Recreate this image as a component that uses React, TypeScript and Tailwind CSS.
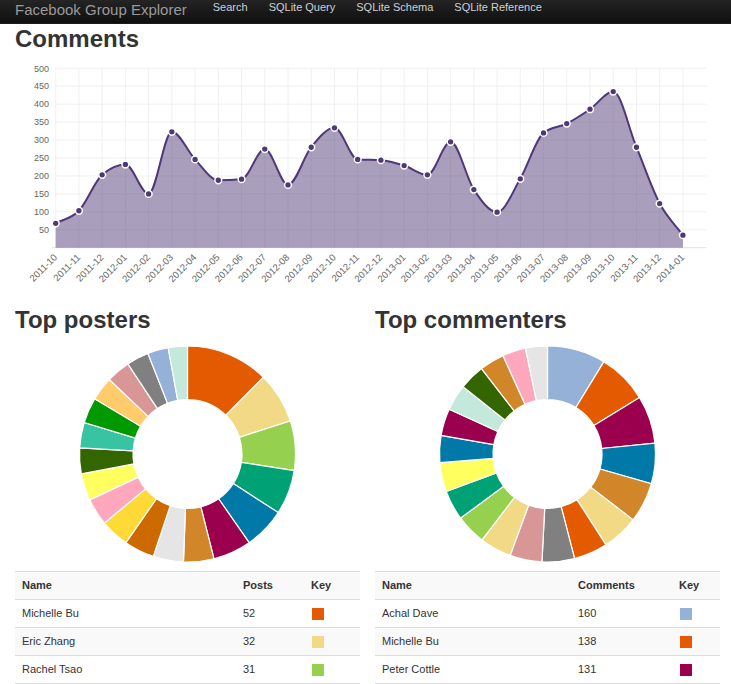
const months = [
  "2011-10", "2011-11", "2011-12", "2012-01", "2012-02", "2012-03", "2012-04",
  "2012-05", "2012-06", "2012-07", "2012-08", "2012-09", "2012-10", "2012-11",
  "2012-12", "2013-01", "2013-02", "2013-03", "2013-04", "2013-05", "2013-06",
  "2013-07", "2013-08", "2013-09", "2013-10", "2013-11", "2013-12", "2014-01",
];
const counts = [
  68, 103, 203, 232, 150, 323, 246, 188, 191, 275, 175, 280, 334, 246,
  244, 229, 203, 295, 162, 99, 192, 320, 346, 386, 435, 280, 123, 35,
];

const posters = [
  { name: "Michelle Bu", n: 52, color: "#e35a00" },
  { name: "Eric Zhang", n: 32, color: "#f1d986" },
  { name: "Rachel Tsao", n: 31, color: "#95d14f" },
  { name: "", n: 28, color: "#00a275" },
  { name: "", n: 26, color: "#0079a8" },
  { name: "", n: 24, color: "#9b004f" },
  { name: "", n: 19, color: "#d1862a" },
  { name: "", n: 19, color: "#e5e5e5" },
  { name: "", n: 19, color: "#cc6a00" },
  { name: "", n: 18, color: "#ffd935" },
  { name: "", n: 17, color: "#ffa7bc" },
  { name: "", n: 17, color: "#ffff5f" },
  { name: "", n: 16, color: "#336600" },
  { name: "", n: 16, color: "#38c3a3" },
  { name: "", n: 16, color: "#009a00" },
  { name: "", n: 15, color: "#ffcb6b" },
  { name: "", n: 15, color: "#d99696" },
  { name: "", n: 14, color: "#808080" },
  { name: "", n: 13, color: "#96b1d8" },
  { name: "", n: 12, color: "#c4e9dc" },
];

const commenters = [
  { name: "Achal Dave", n: 160, color: "#96b1d8" },
  { name: "Michelle Bu", n: 138, color: "#e35a00" },
  { name: "Peter Cottle", n: 131, color: "#9b004f" },
  { name: "", n: 111, color: "#0079a8" },
  { name: "", n: 110, color: "#d1862a" },
  { name: "", n: 100, color: "#f1d986" },
  { name: "", n: 93, color: "#e35a00" },
  { name: "", n: 89, color: "#808080" },
  { name: "", n: 88, color: "#d99696" },
  { name: "", n: 87, color: "#f1d986" },
  { name: "", n: 83, color: "#95d14f" },
  { name: "", n: 82, color: "#00a275" },
  { name: "", n: 80, color: "#ffff5f" },
  { name: "", n: 74, color: "#0079a8" },
  { name: "", n: 74, color: "#9b004f" },
  { name: "", n: 72, color: "#c4e9dc" },
  { name: "", n: 70, color: "#336600" },
  { name: "", n: 68, color: "#d1862a" },
  { name: "", n: 64, color: "#ffa7bc" },
  { name: "", n: 60, color: "#e5e5e5" },
];

// chart geometry, in page coordinates
const X0 = 55.7;
const STEP = 23.23;
const BASE = 247.7;
const UNIT = 0.3588;
const xAt = (i: number) => X0 + i * STEP;
const yAt = (v: number) => BASE - v * UNIT;

// monotone cubic, like d3.curveMonotoneX
const monotone = (pts: [number, number][]) => {
  const n = pts.length;
  const s: number[] = [];
  for (let i = 0; i < n - 1; i++) s.push((pts[i + 1][1] - pts[i][1]) / (pts[i + 1][0] - pts[i][0]));
  const t: number[] = [];
  for (let i = 0; i < n; i++) {
    if (i === 0) t.push(s[0]);
    else if (i === n - 1) t.push(s[n - 2]);
    else {
      const a = s[i - 1];
      const b = s[i];
      if (a * b <= 0) t.push(0);
      else t.push((Math.sign(a) + Math.sign(b)) * Math.min(Math.abs(a), Math.abs(b), 0.5 * Math.abs((a + b) / 2)));
    }
  }
  let d = `M${pts[0][0]},${pts[0][1]}`;
  for (let i = 0; i < n - 1; i++) {
    const h = (pts[i + 1][0] - pts[i][0]) / 3;
    d += ` C${pts[i][0] + h},${pts[i][1] + t[i] * h} ${pts[i + 1][0] - h},${pts[i + 1][1] - t[i + 1] * h} ${pts[i + 1][0]},${pts[i + 1][1]}`;
  }
  return d;
};

const CommentsChart = () => {
  const pts = counts.map((v, i) => [xAt(i), yAt(v)] as [number, number]);
  const line = monotone(pts);
  const area = `${line} L${xAt(counts.length - 1)},${BASE} L${X0},${BASE} Z`;
  const ticks = [50, 100, 150, 200, 250, 300, 350, 400, 450, 500];
  return (
    <svg width={731} height={251} className="block">
      <g transform="translate(0,-54)">
        {ticks.map((v) => (
          <line key={v} x1={X0} x2={706.7} y1={yAt(v)} y2={yAt(v)} stroke="#f0f0f0" strokeWidth={1} />
        ))}
        {months.map((m, i) => (
          <line key={m} x1={xAt(i)} x2={xAt(i)} y1={yAt(500)} y2={BASE} stroke="#f0f0f0" strokeWidth={1} />
        ))}
        <line x1={52} x2={706.7} y1={BASE} y2={BASE} stroke="#e2e2e2" strokeWidth={1} />
        <path d={area} fill="#563d7c" fillOpacity={0.5} />
        <path d={line} fill="none" stroke="#4f3877" strokeWidth={2} />
        {pts.map(([x, y], i) => (
          <circle key={i} cx={x} cy={y} r={3.4} fill="#4f3877" stroke="#fff" strokeWidth={1.5} />
        ))}
        {ticks.map((v) => (
          <text key={v} x={49} y={yAt(v) + 3.2} textAnchor="end" fontSize={9} fill="#666" fontFamily="Liberation Sans, Arial, sans-serif">
            {v}
          </text>
        ))}
        {months.map((m, i) => (
          <text
            key={m}
            x={xAt(i) + 2}
            y={258}
            textAnchor="end"
            fontSize={9.5}
            fill="#666"
            fontFamily="Liberation Sans, Arial, sans-serif"
            transform={`rotate(-45 ${xAt(i) + 2} 258)`}
          >
            {m}
          </text>
        ))}
      </g>
    </svg>
  );
};

const arc = (cx: number, cy: number, r0: number, r1: number, a0: number, a1: number) => {
  const p = (r: number, a: number) => `${cx + r * Math.sin(a)},${cy - r * Math.cos(a)}`;
  const large = a1 - a0 > Math.PI ? 1 : 0;
  return `M${p(r1, a0)} A${r1},${r1} 0 ${large} 1 ${p(r1, a1)} L${p(r0, a1)} A${r0},${r0} 0 ${large} 0 ${p(r0, a0)} Z`;
};

type Slice = { name: string; n: number; color: string };

const Donut = ({ data }: { data: Slice[] }) => {
  const total = data.reduce((a, d) => a + d.n, 0);
  let acc = 0;
  return (
    <svg width={345} height={236} className="block">
      {data.map((d, i) => {
        const a0 = (acc / total) * Math.PI * 2;
        acc += d.n;
        const a1 = (acc / total) * Math.PI * 2;
        return <path key={i} d={arc(172.5, 119, 54.5, 108, a0, a1)} fill={d.color} stroke="#fff" strokeWidth={1.2} />;
      })}
    </svg>
  );
};

const TopTable = ({ data, label, nameW, countW }: { data: Slice[]; label: string; nameW: string; countW: string }) => (
  <div className="text-[11px] text-[#333]">
    <div className="flex items-center h-[28px] border-t border-[#ddd] bg-[#f9f9f9] font-bold">
      <div className={`${nameW} px-[7px]`}>Name</div>
      <div className={`${countW} px-[7px]`}>{label}</div>
      <div className="flex-1 px-[7px]">Key</div>
    </div>
    {data.slice(0, 3).map((d, i) => (
      <div
        key={d.name}
        className={`flex items-center h-[28px] border-t border-[#ddd] ${i === 1 ? "bg-[#f9f9f9]" : "bg-white"} ${i === 2 ? "border-b h-[29px]" : ""}`}
      >
        <div className={`${nameW} px-[7px]`}>{d.name}</div>
        <div className={`${countW} px-[7px]`}>{d.n}</div>
        <div className="flex-1 px-[7px] pl-[8px]">
          <span className="block w-[12px] h-[12px]" style={{ backgroundColor: d.color }} />
        </div>
      </div>
    ))}
  </div>
);

export default function App() {
  return (
    <div className="min-h-screen bg-white text-[#333] font-['Liberation_Sans',Helvetica,Arial,sans-serif]">
      <nav className="h-[24px] bg-linear-to-b from-[#242424] to-[#0f0f0f] border-b border-[#1a1a1a] flex items-start pl-[15px]">
        <span className="text-[15px] leading-none text-[#9a9a9a] mt-[2px]">Facebook Group Explorer</span>
        <div className="flex gap-[21px] ml-[26px] mt-[2px] text-[11px] leading-none text-[#cdd0d4]">
          <span>Search</span>
          <span>SQLite Query</span>
          <span>SQLite Schema</span>
          <span>SQLite Reference</span>
        </div>
      </nav>
      <h2 className="px-[15px] h-[30px] text-[24px] leading-[30px] font-bold">Comments</h2>
      <CommentsChart />
      <div className="px-[15px] grid grid-cols-2 gap-[15px] w-[735px]">
        <div>
          <h2 className="h-[30px] text-[24px] leading-[30px] font-bold">Top posters</h2>
          <Donut data={posters} />
          <TopTable data={posters} label="Posts" nameW="w-[221px]" countW="w-[68px]" />
        </div>
        <div>
          <h2 className="h-[30px] text-[24px] leading-[30px] font-bold">Top commenters</h2>
          <Donut data={commenters} />
          <TopTable data={commenters} label="Comments" nameW="w-[196px]" countW="w-[101px]" />
        </div>
      </div>
    </div>
  );
}
